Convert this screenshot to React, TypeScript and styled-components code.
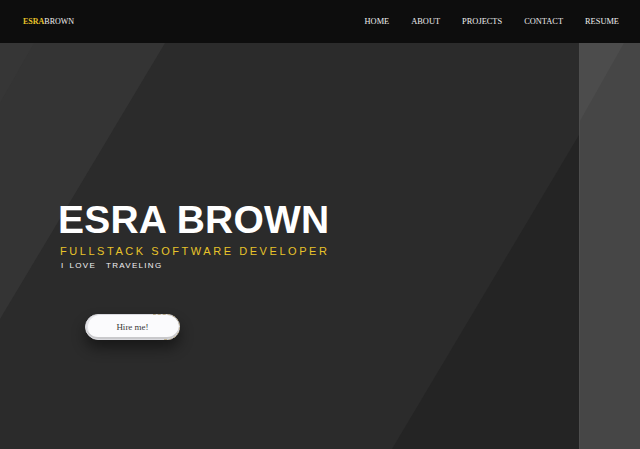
import React from "react";
import styled, { createGlobalStyle } from "styled-components";

const Global = createGlobalStyle`
  html, body { margin: 0; padding: 0; background: #2b2b2b; }
  body { width: 640px; height: 449px; overflow: hidden; }
  * { box-sizing: border-box; }
`;

const Page = styled.div`
  width: 640px;
  height: 449px;
  display: flex;
  flex-direction: column;
`;

const Header = styled.header`
  height: 43px;
  flex: none;
  background: #0d0d0d;
  display: flex;
  align-items: center;
  justify-content: space-between;
  padding: 0 21px 0 23px;
  font-family: "Liberation Serif", "Times New Roman", serif;
  color: #e9e9e9;
`;

const Logo = styled.div`
  display: flex;
  font-size: 8px;
  line-height: 1;
  padding-top: 1px;
`;

const LogoPart = styled.span<{ $accent?: boolean }>`
  color: ${(p) => (p.$accent ? "#e8c32a" : "#f2f2f2")};
  font-weight: ${(p) => (p.$accent ? 700 : 400)};
`;

const Nav = styled.nav`
  display: flex;
  gap: 22px;
  font-size: 8.4px;
  line-height: 1;
  padding-top: 1px;
`;

const NavLink = styled.a`
  color: #ededed;
  text-decoration: none;
  text-transform: uppercase;
`;

const Hero = styled.section`
  flex: 1;
  display: flex;
`;

const Main = styled.div`
  flex: 1;
  position: relative;
  background: #2b2b2b;
  overflow: hidden;
  padding: 157px 0 0 58px;

  &::before {
    content: "";
    position: absolute;
    inset: 0;
    background: #343434;
    clip-path: polygon(0 0, 165px 0, 0 276px);
  }
  &::after {
    content: "";
    position: absolute;
    inset: 0;
    background: #242424;
    clip-path: polygon(100% 92px, 100% 100%, 392px 100%);
  }
`;

const Faint = styled.div`
  position: absolute;
  inset: 0;
  background: #363636;
  clip-path: polygon(0 0, 34px 0, 0 60px);
`;

const Content = styled.div`
  position: relative;
  z-index: 1;
  display: flex;
  flex-direction: column;
  align-items: flex-start;
  font-family: "Liberation Sans", Arial, sans-serif;
`;

const Title = styled.h1`
  margin: 0;
  font-size: 39px;
  line-height: 1;
  font-weight: 700;
  color: #ffffff;
  letter-spacing: 0.2px;
`;

const Subtitle = styled.h2`
  margin: 7px 0 0 2px;
  font-size: 11px;
  line-height: 1;
  font-weight: 400;
  color: #e8c32a;
  letter-spacing: 2.55px;
`;

const Tagline = styled.p`
  margin: 5px 0 0 3px;
  font-size: 8px;
  line-height: 1;
  color: #f2f2f2;
  letter-spacing: 1.3px;
  word-spacing: 1.5px;
  white-space: pre;
`;

const HireButton = styled.button`
  position: relative;
  margin: 44px 0 0 27px;
  width: 95px;
  height: 26px;
  border-radius: 13px;
  border: 1px solid #d9d9de;
  background: #fbfbfd;
  box-shadow: inset 0 -2px 0 #c9c9cc, inset 2px 0 0 #e4e4e8, 0 8px 14px rgba(0, 0, 0, 0.45);
  font-family: "Liberation Serif", "Times New Roman", serif;
  font-size: 9px;
  color: #3a3a3a;
  padding: 0;
  cursor: pointer;

  &::after {
    content: "";
    position: absolute;
    inset: -1px;
    border-radius: 13px;
    border: 1px dashed #b9ab8c;
    clip-path: polygon(68px 0, 100% 0, 100% 100%, 78px 100%, 78px 60%, 68px 30%);
  }
`;

const Side = styled.aside`
  width: 61px;
  flex: none;
  position: relative;
  background: #464646;
  border-left: 1px solid #4e4e4e;

  &::before {
    content: "";
    position: absolute;
    inset: 0;
    background: #4c4c4c;
    clip-path: polygon(0 0, 44px 0, 0 78px);
  }
`;

const links = ["Home", "About", "Projects", "Contact", "Resume"];

export default function App() {
  return (
    <>
      <Global />
      <Page>
        <Header>
          <Logo>
            <LogoPart $accent>ESRA</LogoPart>
            <LogoPart>BROWN</LogoPart>
          </Logo>
          <Nav>
            {links.map((l) => (
              <NavLink key={l} href="#">
                {l}
              </NavLink>
            ))}
          </Nav>
        </Header>
        <Hero>
          <Main>
            <Faint />
            <Content>
              <Title>ESRA BROWN</Title>
              <Subtitle>FULLSTACK SOFTWARE DEVELOPER</Subtitle>
              <Tagline>{"I LOVE  TRAVELING"}</Tagline>
              <HireButton>Hire me!</HireButton>
            </Content>
          </Main>
          <Side />
        </Hero>
      </Page>
    </>
  );
}
